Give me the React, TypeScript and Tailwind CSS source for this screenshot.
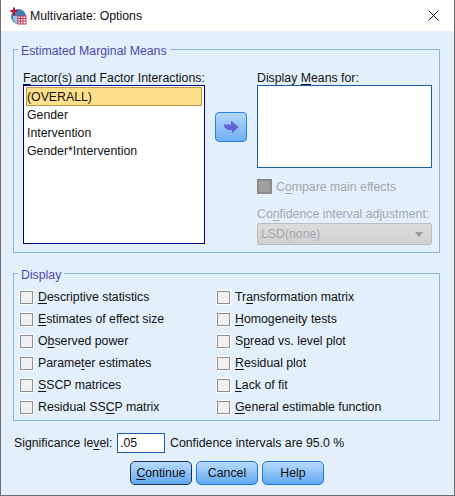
const leftOptions: [string, string, string][] = [
  ['', 'D', 'escriptive statistics'],
  ['', 'E', 'stimates of effect size'],
  ['O', 'b', 'served power'],
  ['Parame', 't', 'er estimates'],
  ['', 'S', 'SCP matrices'],
  ['Residual SS', 'C', 'P matrix'],
]

const rightOptions: [string, string, string][] = [
  ['Tr', 'a', 'nsformation matrix'],
  ['', 'H', 'omogeneity tests'],
  ['S', 'p', 'read vs. level plot'],
  ['', 'R', 'esidual plot'],
  ['', 'L', 'ack of fit'],
  ['', 'G', 'eneral estimable function'],
]

function Mnemonic({ parts }: { parts: [string, string, string] }) {
  return (
    <span>
      {parts[0]}
      <span className="underline underline-offset-2">{parts[1]}</span>
      {parts[2]}
    </span>
  )
}

function Check({ parts }: { parts: [string, string, string] }) {
  return (
    <div className="flex items-center h-[22px]">
      <span className="w-[13px] h-[13px] border border-[#8f8f8f] bg-[#f0f0f0] outline-1 outline-white mr-[5px]" />
      <Mnemonic parts={parts} />
    </div>
  )
}

function DialogButton({ children, active }: { children: React.ReactNode; active?: boolean }) {
  return (
    <button
      className={`w-[62px] h-[24px] rounded-[5px] border bg-gradient-to-b from-[#b9dafb] to-[#5ea8f0] ${
        active ? 'border-[#1c3350]' : 'border-[#1f7ad6]'
      }`}
    >
      {children}
    </button>
  )
}

function AppIcon() {
  return (
    <svg width="18" height="18" viewBox="0 0 18 18" className="ml-[8px] mr-[3px]">
      <circle cx="9.5" cy="9.5" r="7.5" fill="#3f7fb8" />
      <path d="M4 13a7 7 0 0 0 8 3V9H4z" fill="#9cc3e2" />
      <rect x="9" y="9" width="8" height="8" fill="#ffffff" stroke="#c8324e" />
      <path d="M9 11.5h8M9 14h8M11.5 9v8M14 9v8" stroke="#c8324e" />
      <path d="M5 0.5v8M1.5 4h7" stroke="#c8102e" strokeWidth="2" />
    </svg>
  )
}

export default function App() {
  return (
    <div className="w-[455px] h-[496px] flex flex-col overflow-hidden border-x border-b border-[#6f6f6f] bg-[#e3effb] text-[12.3px] leading-none text-[#111] font-['Liberation_Sans',Arial,sans-serif]">
      {/* Title bar */}
      <div className="h-[31px] shrink-0 bg-white flex items-center">
        <AppIcon />
        <span className="flex-1 pt-[2px]">Multivariate: Options</span>
        <svg width="11" height="11" viewBox="0 0 11 11" className="mr-[15px]">
          <path d="M0.5 0.5l10 10M10.5 0.5l-10 10" stroke="#111" />
        </svg>
      </div>

      <div className="flex-1 flex flex-col pl-[12px] pr-[14px]">
        {/* Estimated Marginal Means */}
        <fieldset className="mt-[11px] h-[211px] border border-[#8db4dc] pl-[9px] pr-[7px] min-w-0">
          <legend className="ml-[-5px] px-[3px] text-[#4a4ab0] h-[14px] leading-[18px]">Estimated Marginal Means</legend>
          <div className="flex mt-[15px]">
            <div className="w-[182px] shrink-0">
              <div className="h-[14px] leading-[14px] whitespace-nowrap">
                <Mnemonic parts={['', 'F', 'actor(s) and Factor Interactions:']} />
              </div>
              <div className="h-[159px] border border-[#00008b] bg-white px-[2px] py-[1px]">
                <div className="h-[19px] flex items-center pt-[1px] bg-[#ffe08a] border border-[#b59a50]">(OVERALL)</div>
                <div className="h-[18px] flex items-center pl-[1px]">Gender</div>
                <div className="h-[18px] flex items-center pl-[1px]">Intervention</div>
                <div className="h-[18px] flex items-center pl-[1px]">Gender*Intervention</div>
              </div>
            </div>

            <div className="w-[52px] shrink-0 flex justify-start pt-[41px] pl-[10px]">
              <button className="w-[32px] h-[30px] rounded-[4px] border border-[#2383e2] bg-gradient-to-b from-[#b4d6fa] to-[#6cb0f2] flex items-center justify-center">
                <svg width="15" height="14" viewBox="0 0 15 14">
                  <path d="M0 4.5h7V0.5L14.5 7 8 13.5V10H4L0 7z" fill="#6464d2" />
                </svg>
              </button>
            </div>

            <div className="w-[175px] shrink-0 text-[#111]">
              <div className="h-[14px] leading-[14px] whitespace-nowrap">
                Display <span className="underline underline-offset-2">M</span>eans for:
              </div>
              <div className="h-[83px] border border-[#1a5fa8] bg-white" />
              <div className="mt-[11px] flex items-center h-[15px] text-[#a3a8ad]">
                <span className="w-[15px] h-[15px] border-2 border-[#8a8a8a] bg-[#a0a0a0] mr-[4px]" />
                <span className="pt-[2px]">
                  C<span className="underline underline-offset-2">o</span>mpare main effects
                </span>
              </div>
              <div className="mt-[14px] h-[14px] leading-[12px] whitespace-nowrap text-[#a3a8ad]">
                Co<span className="underline underline-offset-2">n</span>fidence interval adjustment:
              </div>
              <div className="h-[22px] mt-[1px] rounded-[2px] border border-[#bdbdbd] bg-gradient-to-b from-[#dcdcdc] to-[#d0d0d0] flex items-center justify-between pl-[3px] pr-[8px] text-[#a3a8ad]">
                <span>LSD(none)</span>
                <svg width="8" height="5" viewBox="0 0 8 5">
                  <path d="M0 0h8L4 5z" fill="#9a9a9a" />
                </svg>
              </div>
            </div>
          </div>
        </fieldset>

        {/* Display */}
        <fieldset className="mt-[13px] h-[155px] border border-[#8db4dc] pl-[6px] min-w-0">
          <legend className="ml-[-2px] px-[3px] text-[#4a4ab0] h-[14px] leading-[18px]">Display</legend>
          <div className="grid grid-cols-[197px_1fr] mt-[6px]">
            <div className="flex flex-col">
              {leftOptions.map((o) => (
                <Check key={o.join('')} parts={o} />
              ))}
            </div>
            <div className="flex flex-col">
              {rightOptions.map((o) => (
                <Check key={o.join('')} parts={o} />
              ))}
            </div>
          </div>
        </fieldset>

        {/* Significance */}
        <div className="mt-[12px] h-[20px] flex items-center pl-[1px] whitespace-nowrap">
          <span className="w-[103px] shrink-0">
            Significance le<span className="underline underline-offset-2">v</span>el:
          </span>
          <div className="w-[48px] h-[20px] border border-[#1a5fa8] bg-white flex items-center pl-[2px]">.05</div>
          <span className="ml-[5px]">Confidence intervals are 95.0 %</span>
        </div>

        {/* Buttons */}
        <div className="mt-[8px] flex gap-[4px] pl-[117px]">
          <DialogButton active>
            <span className="underline underline-offset-2">C</span>ontinue
          </DialogButton>
          <DialogButton>Cancel</DialogButton>
          <DialogButton>Help</DialogButton>
        </div>
      </div>
    </div>
  )
}
